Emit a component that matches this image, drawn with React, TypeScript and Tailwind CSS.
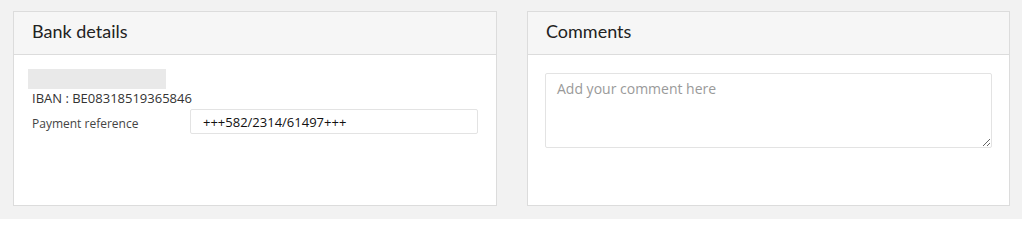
const Card = ({ title, children }: { title: string; children: React.ReactNode }) => (
  <section className="h-[195px] border border-[#dcdcdc] bg-white">
    <header className="flex h-[43px] items-center border-b border-[#dcdcdc] bg-[#f6f6f6] px-[18px]">
      <h2 className="font-['Lato',sans-serif] text-[18px] leading-none text-[#222] pb-[4px]">{title}</h2>
    </header>
    {children}
  </section>
);

export default function App() {
  return (
    <div className="min-h-[219px] bg-[#f2f2f2] pl-[13px] pr-[12px] pt-[11px] pb-[13px] font-['Open_Sans',sans-serif]">
      <div className="grid grid-cols-[484px_1fr] gap-[30px]">
        <Card title="Bank details">
          <div className="px-[18px] pt-[14px]">
            <div className="-ml-[4px] h-[20px] w-[138px] bg-[#e9e9e9]" />
            <p className="text-[13px] leading-[19px] text-[#333]">IBAN : BE08318519365846</p>
            <div className="mt-[1px] flex items-center">
              <label className="w-[158px] shrink-0 pt-[4px] text-[12px] text-[#444]">Payment reference</label>
              <input
                readOnly
                value="+++582/2314/61497+++"
                className="h-[25px] flex-1 rounded-[2px] border border-[#e3e3e3] bg-white px-[12px] text-[13px] text-[#111] outline-none"
              />
            </div>
          </div>
        </Card>
        <Card title="Comments">
          <div className="px-[17px] pt-[18px]">
            <textarea
              placeholder="Add your comment here"
              className="block h-[75px] w-full rounded-[2px] border border-[#e3e3e3] px-[11px] py-[5px] text-[14px] leading-[20px] text-[#333] placeholder:text-[#9a9a9a] outline-none"
            />
          </div>
        </Card>
      </div>
    </div>
  );
}
